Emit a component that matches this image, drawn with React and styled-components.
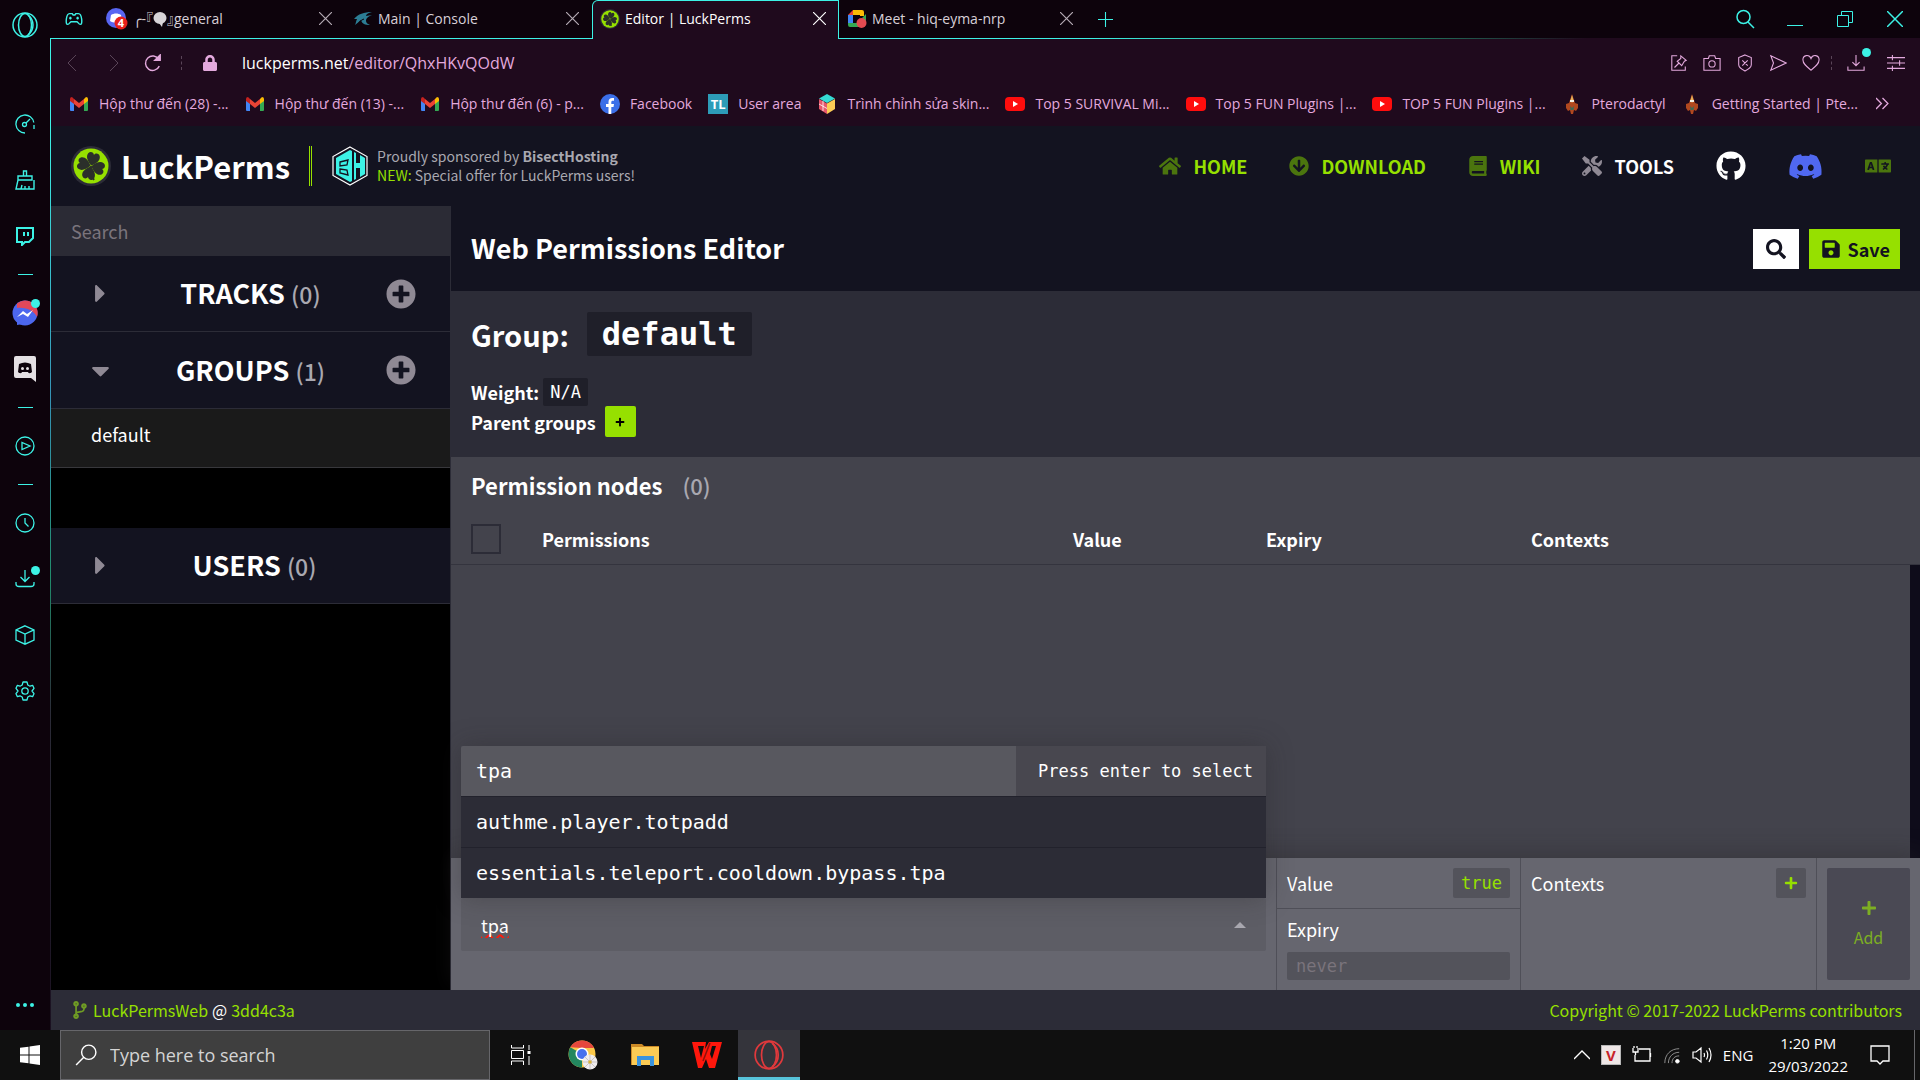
import React from 'react';
import styled, { createGlobalStyle } from 'styled-components';
import {
  FaHome,
  FaArrowCircleDown,
  FaBook,
  FaTools,
  FaGithub,
  FaDiscord,
  FaLanguage,
  FaPlusCircle,
  FaPlus,
  FaSave,
  FaSearch,
  FaCodeBranch,
  FaCaretRight,
  FaCaretDown,
  FaLock,
} from 'react-icons/fa';

const colors = {
  neon: '#3cf2e6',
  pink: '#e3a9dd',
  lime: '#96e000',
  limeDim: '#4b750e',
  night: '#131320',
  slate: '#2c2c37',
  steel: '#43434c',
  ash: '#66666f',
  chrome: '#1f0a1d',
  chromeDark: '#0d030c',
};

const fonts = {
  page: '"Noto Sans CJK JP", "Noto Sans CJK SC", sans-serif',
  mono: '"DejaVu Sans Mono", monospace',
  ui: '"Open Sans", "DejaVu Sans Mono", "Noto Sans CJK JP", sans-serif',
};

const GlobalStyle = createGlobalStyle`
  * {
    box-sizing: border-box;
  }
  body {
    margin: 0;
    background: #000;
    color: #fff;
    font-family: ${fonts.page};
    font-size: 18px;
  }
  button, input {
    font: inherit;
    color: inherit;
    border: none;
    padding: 0;
    margin: 0;
    background: none;
  }
  button {
    cursor: pointer;
  }
  a {
    color: inherit;
    text-decoration: none;
  }
  h1, h2, h3, p, ul {
    margin: 0;
    padding: 0;
  }
  svg {
    display: block;
    flex: none;
  }
`;

/* ---------- small drawings ---------- */

const Line = ({ size = 20, width, color = 'currentColor', stroke = 1, box = 20, children }) => (
  <svg width={width || size} height={size} viewBox={`0 0 ${box} ${box}`} fill="none" stroke={color} strokeWidth={stroke}>
    {children}
  </svg>
);

const OperaRing = ({ size, color }) => (
  <Line size={size} box={26} color={color} stroke={1.5}>
    <circle cx="13" cy="13" r="12" />
    <ellipse cx="13" cy="13" rx="6.5" ry="11.5" />
    <path d="M16 3c4 3 5 7 5 10s-1 7-5 10" />
  </Line>
);

const Gamepad = () => (
  <Line size={18} color={colors.neon} stroke={1.6}>
    <path d="M5 4h3l1 1.500h2L12 4h3c2 0 3 2 3.500 6 .5 4 0 6-1.500 6-2 0-2.500-3-4-3H7c-1.500 0-2 3-4 3-1.500 0-2-2-1.500-6C2 6 3 4 5 4z" />
    <path d="M6 7.500v3M4.500 9h3M12.500 9h3M14 7.500v3" />
  </Line>
);

const Cross = ({ size = 13 }) => (
  <Line size={size} box={12} stroke={1.1}>
    <path d="M0 0l12 12M12 0L0 12" />
  </Line>
);

const DiscordBadge = () => (
  <svg width="22" height="22" viewBox="0 0 22 22">
    <circle cx="10" cy="10" r="10" fill="#5865f2" />
    <path d="M5 7c3-2 7-2 10 0l1 6c-3 2-9 2-12 0z" fill="#fff" />
    <circle cx="15" cy="15" r="6.500" fill="#e8201c" />
    <text x="15" y="19" fontSize="11" fontWeight="700" fill="#fff" textAnchor="middle" fontFamily="Open Sans">4</text>
  </svg>
);

const Bubble = () => (
  <svg width="14" height="16" viewBox="0 0 14 16">
    <ellipse cx="7" cy="7" rx="6.500" ry="6" fill="#d8d4d8" />
    <path d="M6 12l3 4 1-5z" fill="#d8d4d8" />
  </svg>
);

const Bird = () => (
  <svg width="20" height="16" viewBox="0 0 20 16">
    <path d="M1 8C5 3 11 1 19 1c-4 1-6 2-6 4l6-1c-5 2-6 4-6 6 0 2 2 3 4 4-5 0-8-1-9-5-2 1-3 3-6 5 1-2 1-4 2-6z" fill="#2c7d94" />
    <path d="M4 15c2-4 4-6 7-7" stroke="#0d030c" fill="none" />
  </svg>
);

const Clover = ({ size }) => (
  <svg width={size} height={size} viewBox="0 0 40 40">
    <circle cx="20" cy="20" r="20" fill="#2c2c37" />
    <circle cx="20" cy="20" r="17.500" fill={colors.lime} />
    {[15, 105, 195, 285].map((angle) => (
      <path
        key={angle}
        d="M20 19.500C15 16 12.500 12 14 8.500c1.500-3 5-2.500 6 0 1-2.500 4.500-3 6 0 1.500 3.500-1 7.500-6 11z"
        fill="#2b2f2a"
        transform={`rotate(${angle} 20 20)`}
      />
    ))}
    <path d="M20 20c0 5 0 9 3 14" stroke="#2b2f2a" strokeWidth="1.800" fill="none" />
  </svg>
);

const MeetLogo = () => (
  <svg width="20" height="20" viewBox="0 0 20 20">
    <path d="M1 6l5-5v5z" fill="#ea4335" />
    <path d="M6 1h9q2 0 2 2v4h-4V6H6z" fill="#fbbc04" />
    <path d="M1 6h5v8H1z" fill="#4285f4" />
    <path d="M1 14h5v4H3q-2 0-2-2zM6 14h8v4H6zM15 9l4-4v9z" fill="#34a853" />
    <circle cx="14.500" cy="14" r="5" fill="#e34a50" />
  </svg>
);

const Gmail = () => (
  <svg width="20" height="16" viewBox="0 0 20 16">
    <path d="M1 4l4 3v8H2q-1 0-1-1z" fill="#4285f4" />
    <path d="M19 4l-4 3v8h3q1 0 1-1z" fill="#34a853" />
    <path d="M15 3l2-2q2 0 2 2v2l-4 3z" fill="#fbbc04" />
    <path d="M5 3l5 4 5-4v5l-5 4-5-4z" fill="#ea4335" />
    <path d="M1 3q0-2 2-2l2 2v5L1 5z" fill="#c5221f" />
  </svg>
);

const FacebookLogo = () => (
  <svg width="20" height="20" viewBox="0 0 20 20">
    <circle cx="10" cy="10" r="10" fill="#3b6fe8" />
    <path d="M8.500 20v-7H6v-3h2.500V8c0-2.600 1.500-4 3.800-4 .9 0 1.700.1 1.700.1v2.600h-1.200c-1.200 0-1.500.7-1.500 1.400V10H14l-.5 3h-2.200v7z" fill="#fff" />
  </svg>
);

const TlLogo = styled.span`
  width: 20px;
  height: 20px;
  background: #2d9cb8;
  color: #fff;
  font-size: 13px;
  font-weight: 700;
  line-height: 20px;
  text-align: center;
`;

const SkinCube = () => (
  <svg width="20" height="20" viewBox="0 0 20 20">
    <path d="M10 0l8 4.500L10 9 2 4.500z" fill="#35dbd4" />
    <path d="M2 5l8 4.500V20l-8-5z" fill="#e6566a" />
    <path d="M18 5l-8 4.500V20l8-5z" fill="#fbcb55" />
    <path d="M2 10l8 4.500M6 7v10" stroke="#fff" strokeWidth=".8" fill="none" />
  </svg>
);

const YouTube = () => (
  <svg width="20" height="20" viewBox="0 0 20 20">
    <rect y="3" width="20" height="14" rx="4" fill="#ff0d0d" />
    <path d="M8 7l5 3-5 3z" fill="#fff" />
  </svg>
);

const Ptero = () => (
  <svg width="20" height="20" viewBox="0 0 20 20">
    <path d="M10 0l2 6 1 3 3 1v4l-2 3-2-1-1 4h-2l-1-4-2 1-2-3v-4l3-1 1-3z" fill="#b1481f" />
    <path d="M10 1l1.500 5-1.500 3-1.500-3z" fill="#e8b45d" />
    <path d="M8 6h4v2H8z" fill="#f4efe3" />
    <path d="M8 12l2 2 2-2-.5 4h-3z" fill="#3b6b58" />
  </svg>
);

const BisectLogo = () => (
  <svg width="38" height="40" viewBox="0 0 38 40">
    <path d="M19 1l17 9.500v19L19 39 2 29.500v-19z" fill="#131320" stroke="#fff" strokeWidth="1.200" />
    <path d="M19 4l2 1v30l-2 1-14-8V12z" fill={colors.neon} />
    <path d="M9 16l8-2-1 5-7 1zM9 23l7 1 1 5-8-2z" fill="none" stroke="#131320" strokeWidth="1.300" />
    <path d="M23 6l2 1v10h4V9l5 3v16l-5 3v-9h-4v11l-2 1z" fill={colors.neon} />
  </svg>
);

const WindowsLogo = () => (
  <svg width="20" height="20" viewBox="0 0 20 20" fill="#fff">
    <path d="M0 2.800L8.500 1.700v7.800H0zM9.500 1.500L20 0v9.500H9.500zM0 10.500h8.500v7.800L0 17.200zM9.500 10.500H20V20L9.500 18.500z" />
  </svg>
);

const ChromeLogo = () => (
  <svg width="30" height="30" viewBox="0 0 30 30">
    <circle cx="14" cy="14" r="13.500" fill="#fbc94a" />
    <path d="M14 14L2.300 7.300A13.500 13.500 0 0 0 14 27.500z" fill="#23875f" />
    <path d="M2.300 7.300A13.500 13.500 0 0 1 26 8H14z" fill="#e5473d" />
    <circle cx="14" cy="14" r="6.500" fill="#fff" />
    <circle cx="14" cy="14" r="5" fill="#4770ee" />
    <circle cx="22" cy="22" r="7.500" fill="#f0edee" />
    <path d="M22 15v14M15 22h14M17 17l10 10M27 17L17 27" stroke="#c9c3c6" />
    <circle cx="22" cy="22" r="1.800" fill="#d9b23a" />
  </svg>
);

const FolderLogo = () => (
  <svg width="28" height="24" viewBox="0 0 28 24">
    <path d="M0 1h11l2 2h15v19H0z" fill="#cc8a26" />
    <path d="M1 4h27v18H1z" fill="#fbcb55" />
    <path d="M6 13h17v10h-4v-6h-9v6H6z" fill="#3a93dd" />
  </svg>
);

const WpsLogo = () => (
  <svg width="30" height="28" viewBox="0 0 30 28">
    <path d="M0 1h14l-1 7 4-7h13l-7 26h-6l-3-9-4 9H6z" fill="#ff170c" />
    <path d="M20 5h4l-4 13-2-5z" fill="#101010" />
    <path d="M18 2l-7 18" stroke="#8c120c" strokeWidth="1.500" />
    <path d="M6 5h6l-3 12z" fill="#101010" />
  </svg>
);

const MessengerLogo = () => (
  <svg width="26" height="26" viewBox="0 0 26 26">
    <circle cx="13" cy="13" r="12.500" fill="#4c67ee" />
    <path d="M5 3.500A12.500 12.500 0 0 1 25 17C22 11 15 7 5 8z" fill="#e0485a" />
    <path d="M5 25v-6l6 5z" fill="#4c67ee" />
    <path d="M5 17l6-6 4 3 6-4-5 7-5-3z" fill="#fff" />
  </svg>
);

const DiscordSquare = () => (
  <svg width="24" height="26" viewBox="0 0 24 26">
    <path d="M3 0h18q2 0 2 2v24l-5-4H3q-2 0-2-2V2q0-2 2-2z" fill="#e4e0e4" />
    <path d="M6 8c4-2 8-2 12 0l1 8c-2 2-4 1-4 0H9c0 1-2 2-4 0z" fill="#0d030c" />
    <circle cx="9.500" cy="12.500" r="1.500" fill="#e4e0e4" />
    <circle cx="14.500" cy="12.500" r="1.500" fill="#e4e0e4" />
  </svg>
);

/* ---------- shell ---------- */

const Desktop = styled.div`
  display: flex;
  flex-direction: column;
  min-height: 100vh;
`;

const BrowserWindow = styled.div`
  display: flex;
  flex: 1;
  background: ${colors.chromeDark};
`;

const OperaBar = styled.nav`
  display: flex;
  flex-direction: column;
  align-items: center;
  width: 50px;
  flex: none;
`;

const OperaHome = styled.button`
  display: grid;
  place-items: center;
  width: 50px;
  height: 50px;
  margin-bottom: 46px;
`;

const BarItem = styled.button`
  position: relative;
  display: grid;
  place-items: center;
  width: 50px;
  height: ${({ $last }) => ($last ? '50px' : '56px')};
  margin-top: ${({ $last }) => ($last ? 'auto' : '0')};
  color: ${colors.neon};
`;

const BarDash = styled.span`
  width: 15px;
  height: 1px;
  margin: 10px 0;
  background: ${colors.neon};
`;

const Dot = styled.span`
  position: absolute;
  top: ${({ $top }) => $top}px;
  right: ${({ $right }) => $right}px;
  width: 9px;
  height: 9px;
  border-radius: 50%;
  background: ${colors.neon};
`;

const WindowMain = styled.div`
  display: flex;
  flex-direction: column;
  flex: 1;
  min-width: 0;
`;

/* ---------- tabs ---------- */

const TabStrip = styled.div`
  display: flex;
  align-items: stretch;
  height: 39px;
  font-family: ${fonts.ui};
  font-size: 14px;
  line-height: 20px;
`;

const TabLine = styled.div`
  display: flex;
  align-items: center;
  flex: ${({ $grow }) => ($grow ? 1 : 'none')};
  padding-left: ${({ $grow }) => ($grow ? '12px' : '15px')};
  width: ${({ $grow }) => ($grow ? 'auto' : '48px')};
  color: ${colors.neon};
  border-bottom: 1px solid;
  border-image: ${({ $grow }) =>
    $grow
      ? `linear-gradient(90deg, ${colors.neon}, #218c6c 35%, ${colors.chrome} 60%) 1`
      : `linear-gradient(${colors.neon}, ${colors.neon}) 1`};
`;

const Tab = styled.div`
  display: flex;
  align-items: center;
  gap: 5px;
  flex: none;
  width: 247px;
  padding: 2px 13px 3px 8px;
  color: ${({ $active }) => ($active ? '#fff' : '#d8d0d8')};
  border-bottom: 1px solid ${colors.neon};
  ${({ $active }) =>
    $active &&
    `
    background: ${colors.chrome};
    padding: 1px 12px 4px 7px;
    border: 1px solid ${colors.neon};
    border-bottom: none;
    border-radius: 6px 0 0 0;
  `}
`;

const TabTitle = styled.span`
  display: flex;
  align-items: center;
  flex: 1;
  white-space: nowrap;
  font-feature-settings: 'halt';
`;

const TabClose = styled.button`
  color: ${({ $active }) => ($active ? '#fff' : '#b5abb5')};
`;

const WindowButtons = styled.div`
  display: flex;
  margin-left: auto;
`;

const WindowButton = styled.button`
  display: grid;
  place-items: center;
  width: 50px;
  height: 38px;
`;

/* ---------- address bar ---------- */

const AddressBar = styled.div`
  display: flex;
  align-items: center;
  height: 48px;
  padding: 0 4px 0 2px;
  background: ${colors.chrome};
  color: ${colors.pink};
  font-family: ${fonts.ui};
  border-left: 1px solid ${colors.neon};
`;

const NavButton = styled.button`
  display: grid;
  place-items: center;
  width: 40px;
  height: 40px;
  color: ${({ $muted }) => ($muted ? '#5a4558' : colors.pink)};
`;

const Divider = styled.span`
  height: 14px;
  margin: 0 ${({ $gap }) => $gap}px;
  border-left: 1px dashed #5a4558;
`;

const Url = styled.p`
  flex: 1;
  margin-left: 12px;
  font-size: 16px;
  line-height: 24px;
  span {
    color: #fff;
  }
`;

const ToolButton = styled.button`
  position: relative;
  display: grid;
  place-items: center;
  width: ${({ $wide }) => ($wide ? '40px' : '33px')};
  height: 40px;
`;

const Bookmarks = styled.div`
  display: flex;
  align-items: center;
  gap: 16px;
  height: 39px;
  padding: 0 31px 6px 18px;
  background: ${colors.chrome};
  color: ${colors.pink};
  font-family: ${fonts.ui};
  font-size: 14px;
  line-height: 20px;
  border-left: 1px solid ${colors.neon};
`;

const Bookmark = styled.a`
  display: flex;
  align-items: center;
  gap: 10px;
  white-space: nowrap;
`;

const MoreBookmarks = styled.button`
  margin-left: auto;
`;

/* ---------- LuckPerms page ---------- */

const Page = styled.div`
  display: flex;
  flex-direction: column;
  flex: 1;
  background: ${colors.night};
  border-left: 1px solid;
  border-image: linear-gradient(${colors.neon}, #3593b5 30%, #218c6c 50%, #2b2b37 65%, #1a1020) 1;
`;

const Header = styled.header`
  display: flex;
  align-items: center;
  height: 80px;
  padding: 0 29px 0 20px;
`;

const Brand = styled.a`
  display: flex;
  align-items: center;
  gap: 10px;
  padding-right: 19px;
  font-size: 31px;
  line-height: 40px;
  font-weight: 700;
  border-right: 3px double ${colors.lime};
`;

const Sponsor = styled.a`
  display: flex;
  align-items: center;
  gap: 8px;
  margin-left: 19px;
  color: #a9a8b0;
  font-size: 14px;
  line-height: 19px;
  em {
    color: ${colors.lime};
    font-style: normal;
  }
`;

const Menu = styled.nav`
  display: flex;
  align-items: center;
  gap: 42px;
  margin-left: auto;
`;

const MenuLink = styled.a`
  display: flex;
  align-items: center;
  gap: 12px;
  font-size: 18px;
  line-height: 24px;
  font-weight: 700;
  color: ${({ $plain }) => ($plain ? '#fff' : colors.lime)};
  svg {
    color: ${({ $plain }) => ($plain ? '#8f8994' : colors.limeDim)};
  }
`;

const IconLink = styled.a`
  color: ${({ $color }) => $color};
`;

const Editor = styled.div`
  display: flex;
  flex: 1;
`;

const Side = styled.aside`
  width: 400px;
  flex: none;
  background: #000;
  border-right: 1px solid ${colors.slate};
`;

const SideSearch = styled.input`
  display: block;
  width: 100%;
  height: 50px;
  padding: 0 20px;
  background: #2b2b35;
  font-size: 18px;
  &::placeholder {
    color: #7a747c;
    opacity: 1;
  }
`;

const SideHeading = styled.div`
  display: grid;
  grid-template-columns: 98px 1fr ${({ $add }) => ($add ? '98px' : '90px')};
  align-items: center;
  justify-items: center;
  height: ${({ $tall }) => ($tall ? '77px' : '76px')};
  background: ${colors.night};
  border-bottom: 1px solid ${colors.slate};
  color: #8f8994;
`;

const SideTitle = styled.h2`
  color: #fff;
  font-size: 27px;
  line-height: 40px;
  font-weight: 700;
  span {
    color: #a9a8b0;
    font-size: 23px;
    font-weight: 500;
  }
`;

const GroupList = styled.ul`
  list-style: none;
  margin-bottom: 60px;
`;

const GroupItem = styled.li`
  height: 59px;
  padding: 11px 40px;
  background: #1a1a1a;
  border-bottom: 1px solid #38383c;
  line-height: 28px;
`;

const Content = styled.main`
  display: flex;
  flex-direction: column;
  flex: 1;
  min-width: 0;
`;

const TitleBar = styled.div`
  display: flex;
  align-items: center;
  gap: 10px;
  height: 85px;
  padding: 0 20px;
`;

const PageTitle = styled.h1`
  flex: 1;
  font-size: 27px;
  line-height: 38px;
  padding-bottom: 2px;
  font-weight: 700;
`;

const SquareButton = styled.button`
  display: flex;
  align-items: center;
  justify-content: center;
  gap: 6px;
  height: 40px;
  padding: 0 ${({ $primary }) => ($primary ? '10px 0 12px' : '13px')};
  background: ${({ $primary }) => ($primary ? colors.lime : '#fff')};
  color: ${colors.night};
  font-weight: 700;
`;

const GroupInfo = styled.section`
  display: flex;
  flex-direction: column;
  align-items: flex-start;
  padding: 21px 20px 20px;
  background: ${colors.slate};
`;

const GroupName = styled.h2`
  display: flex;
  align-items: center;
  gap: 18px;
  margin-bottom: 22px;
  font-size: 29px;
  line-height: 42px;
  font-weight: 700;
`;

const Code = styled.code`
  padding: 0 ${({ $large }) => ($large ? '15px' : '7px')};
  border-radius: 2px;
  background: #1f1f29;
  font-family: ${fonts.mono};
  font-size: ${({ $large }) => ($large ? '32px' : '17px')};
  line-height: ${({ $large }) => ($large ? '44px' : '28px')};
  font-weight: ${({ $large }) => ($large ? 700 : 400)};
`;

const InfoRow = styled.div`
  display: flex;
  align-items: center;
  gap: ${({ $gap }) => $gap}px;
  font-size: 18px;
  line-height: 28px;
  font-weight: 700;
`;

const AddParent = styled.button`
  display: grid;
  place-items: center;
  width: 31px;
  height: 31px;
  border-radius: 2px;
  background: ${colors.lime};
  color: #000;
`;

const Nodes = styled.section`
  display: flex;
  flex-direction: column;
  flex: 1;
  background: ${colors.steel};
`;

const NodesTitle = styled.h3`
  padding: 10px 20px 0;
  font-size: 22px;
  line-height: 36px;
  font-weight: 700;
  span {
    margin-left: 15px;
    color: #a9a8b0;
    font-weight: 500;
  }
`;

const NodeTable = styled.table`
  width: 100%;
  margin-top: 11px;
  border-collapse: collapse;
  table-layout: fixed;
  border-bottom: 1px solid #34343e;
  th {
    height: 50px;
    padding: 0;
    text-align: left;
    font-weight: 700;
  }
`;

const CheckCell = styled.th`
  width: 91px;
`;

const Check = styled.input`
  appearance: none;
  display: block;
  width: 30px;
  height: 30px;
  margin-left: 20px;
  border: 2px solid ${colors.slate};
`;

const ColHead = styled.th`
  width: ${({ $width }) => $width};
`;

const NodeScroll = styled.div`
  flex: 1;
  border-right: 10px solid #0e0c1a;
`;

/* ---------- add-node form ---------- */

const AddBar = styled.form`
  display: grid;
  grid-template-columns: 1fr 244px 296px 104px;
  height: 132px;
  background: ${colors.ash};
  box-shadow: 0 -6px 20px rgba(40, 38, 40, 0.35);
`;

const Cell = styled.div`
  padding: 10px;
  border-left: 1px solid #4f4f58;
`;

const PickerCell = styled.div`
  padding: 40px 10px 0;
`;

const Picker = styled.div`
  position: relative;
  display: flex;
  align-items: center;
  height: 53px;
  padding: 0 20px;
  border-radius: 2px;
  background: #5d5d65;
`;

const PickerInput = styled.input`
  flex: 1;
  outline: none;
  font-size: 18px;
  text-decoration: underline wavy #ff1a0a 2px;
  text-decoration-skip-ink: none;
`;

const Triangle = styled.span`
  border: 6px solid transparent;
  border-top: none;
  border-bottom: 6px solid #a9a8b0;
`;

const Options = styled.ul`
  position: absolute;
  left: 0;
  right: 0;
  bottom: 100%;
  list-style: none;
  font-family: ${fonts.mono};
  font-size: 20px;
  line-height: 50px;
  box-shadow: 0 0 24px rgba(40, 38, 40, 0.35);
`;

const Option = styled.li`
  display: flex;
  justify-content: space-between;
  padding-left: 15px;
  background: ${({ $active }) => ($active ? '#58585f' : '#2c2c36')};
  border-bottom: ${({ $last }) => ($last ? 'none' : '1px solid #22222c')};
  border-radius: ${({ $active }) => ($active ? '2px 2px 0 0' : '0')};
`;

const Hint = styled.span`
  padding: 0 13px 0 22px;
  background: #48474f;
  font-size: 17px;
`;

const FieldRow = styled.div`
  display: flex;
  align-items: center;
  justify-content: space-between;
  line-height: 28px;
`;

const SmallButton = styled.button`
  display: grid;
  place-items: center;
  height: 30px;
  padding: 0 8px;
  border-radius: 2px;
  background: #53535b;
  color: ${colors.lime};
  font-family: ${fonts.mono};
  font-size: 17px;
  line-height: 30px;
`;

const ExpiryRow = styled.div`
  margin: 10px -10px 0;
  padding: 5px 10px 0;
  border-top: 1px solid #4f4f58;
  label {
    display: block;
    line-height: 30px;
  }
  input {
    display: block;
    width: 100%;
    height: 28px;
    margin-top: 8px;
    padding: 0 9px;
    border-radius: 2px;
    background: #53535b;
    font-family: ${fonts.mono};
    font-size: 17px;
  }
  input::placeholder {
    color: #7a747c;
    opacity: 1;
  }
`;

const AddButton = styled.button`
  display: flex;
  flex-direction: column;
  align-items: center;
  justify-content: center;
  gap: 6px;
  width: 100%;
  height: 112px;
  padding-top: 4px;
  border-radius: 2px;
  background: #4a4954;
  color: #7dae23;
  font-size: 16px;
  line-height: 30px;
`;

const Footer = styled.footer`
  display: flex;
  align-items: center;
  justify-content: space-between;
  height: 40px;
  padding: 0 18px 0 20px;
  background: ${colors.slate};
  color: ${colors.lime};
  font-size: 16px;
  line-height: 24px;
`;

const Commit = styled.p`
  display: flex;
  align-items: center;
  gap: 4px;
  svg {
    color: #6f9c24;
  }
  span {
    color: #fff;
  }
`;

/* ---------- taskbar ---------- */

const Taskbar = styled.div`
  display: flex;
  align-items: stretch;
  height: 50px;
  background: #101010;
  font-family: ${fonts.ui};
`;

const StartButton = styled.button`
  display: grid;
  place-items: center;
  width: 60px;
`;

const TaskSearch = styled.label`
  display: flex;
  align-items: center;
  gap: 13px;
  width: 430px;
  padding-left: 14px;
  border: 1px solid #66666a;
  background: #3f3f3f;
  input {
    flex: 1;
    font-size: 18px;
  }
  input::placeholder {
    color: #d4d4d4;
    opacity: 1;
  }
`;

const TaskButton = styled.button`
  display: grid;
  place-items: center;
  width: 62px;
  border-bottom: 3px solid ${({ $active }) => ($active ? '#58c4dc' : 'transparent')};
  border-top: 3px solid transparent;
  background: ${({ $active }) => ($active ? '#34343b' : 'none')};
`;

const Tray = styled.div`
  display: flex;
  align-items: center;
  gap: 11px;
  margin-left: auto;
  padding-right: 5px;
  font-size: 15px;
`;

const VietKey = styled.span`
  width: 20px;
  height: 20px;
  border: 1px solid #b7b7b7;
  background: #efe7e7;
  color: #c8232a;
  font-weight: 700;
  line-height: 18px;
  text-align: center;
`;

const Clock = styled.p`
  margin: 0 11px 0 4px;
  text-align: center;
  line-height: 23px;
`;

const ShowDesktop = styled.span`
  align-self: stretch;
  margin-left: 13px;
  border-left: 1px solid #66666a;
`;

const bookmarks = [
  { icon: <Gmail />, text: 'Hộp thư đến (28) -...' },
  { icon: <Gmail />, text: 'Hộp thư đến (13) -...' },
  { icon: <Gmail />, text: 'Hộp thư đến (6) - p...' },
  { icon: <FacebookLogo />, text: 'Facebook' },
  { icon: <TlLogo>TL</TlLogo>, text: 'User area' },
  { icon: <SkinCube />, text: 'Trình chỉnh sửa skin...' },
  { icon: <YouTube />, text: 'Top 5 SURVIVAL Mi...' },
  { icon: <YouTube />, text: 'Top 5 FUN Plugins |...' },
  { icon: <YouTube />, text: 'TOP 5 FUN Plugins |...' },
  { icon: <Ptero />, text: 'Pterodactyl' },
  { icon: <Ptero />, text: 'Getting Started | Pte...' },
];

const Sidebar = () => (
  <OperaBar>
    <OperaHome aria-label="Opera"><OperaRing size={26} color={colors.neon} /></OperaHome>
    <BarItem aria-label="Speed Dial">
      <Line stroke={1.3}><path d="M10 19A9 9 0 1 1 18.800 8.500M19 11v4M11 9l4-4" /><circle cx="9.500" cy="10.500" r="2" /></Line>
    </BarItem>
    <BarItem aria-label="Cleaner">
      <Line stroke={1.4}><path d="M8.500 6V1h3v5M3 10V6h14v4zM3 10l-2 9h18V10M6 19l1-4M10 19v-3M14 19v-3" /></Line>
    </BarItem>
    <BarItem aria-label="Twitch">
      <Line stroke={2}><path d="M2 2h16v10l-4 4h-4l-3 3v-3H2zM9 6v4M13 6v4" /></Line>
    </BarItem>
    <BarDash />
    <BarItem aria-label="Messenger"><MessengerLogo /><Dot $top={14} $right={10} /></BarItem>
    <BarItem aria-label="Discord"><DiscordSquare /></BarItem>
    <BarDash />
    <BarItem aria-label="Player">
      <Line stroke={1.3}><circle cx="10" cy="10" r="9" /><path d="M7 6.500v7l8-3.500z" /></Line>
    </BarItem>
    <BarDash />
    <BarItem aria-label="History">
      <Line stroke={1.3}><circle cx="10" cy="10" r="9" /><path d="M10 5v5l3.500 3.500" /></Line>
    </BarItem>
    <BarItem aria-label="Downloads">
      <Line stroke={1.3}><path d="M10 1v11M5.500 8l4.500 4.500L14.500 8M1 13v2q0 2.500 3 2.500h12q3 0 3-2.500v-2" /></Line>
      <Dot $top={15} $right={10} />
    </BarItem>
    <BarItem aria-label="Extensions">
      <Line stroke={1.3}><path d="M10 .8l9 4v10.400l-9 4-9-4V4.800zM1 4.800l9 4.200 9-4.200M10 9v10" /></Line>
    </BarItem>
    <BarItem aria-label="Settings">
      <Line stroke={1.3}>
        <circle cx="10" cy="10" r="3.200" />
        <path d="M8 1h4l.8 3 2.200 1.200 2.600-.9 1.400 3-2 2.700 2 2.700-1.400 3-2.600-.9-2.200 1.200-.8 3H8l-.8-3L5 14.800l-2.600.9-1.400-3L3 10 1 7.300l1.400-3 2.600.9L7.200 4z" strokeLinejoin="round" />
      </Line>
    </BarItem>
    <BarItem aria-label="More" $last>
      <svg width="18" height="4" viewBox="0 0 18 4" fill={colors.neon}>
        <circle cx="2" cy="2" r="2" /><circle cx="9" cy="2" r="2" /><circle cx="16" cy="2" r="2" />
      </svg>
    </BarItem>
  </OperaBar>
);

const BrowserTab = ({ icon, children, active }) => (
  <Tab $active={active}>
    {icon}
    <TabTitle>{children}</TabTitle>
    <TabClose $active={active} aria-label="Close tab"><Cross /></TabClose>
  </Tab>
);

const Tabs = () => (
  <TabStrip>
    <TabLine><Gamepad /></TabLine>
    <BrowserTab icon={<DiscordBadge />}>╭-『<Bubble />』general</BrowserTab>
    <BrowserTab icon={<Bird />}>Main | Console</BrowserTab>
    <BrowserTab icon={<Clover size={20} />} active>Editor | LuckPerms</BrowserTab>
    <BrowserTab icon={<MeetLogo />}>Meet - hiq-eyma-nrp</BrowserTab>
    <TabLine $grow>
      <Line size={15} box={14}><path d="M7 0v14M0 7h14" /></Line>
      <WindowButtons>
        <WindowButton aria-label="Search tabs">
          <Line size={20} stroke={1.5}><circle cx="8.500" cy="8" r="6.500" /><path d="M13 13l6 6" /></Line>
        </WindowButton>
        <WindowButton aria-label="Minimize">
          <Line size={16} box={16}><path d="M0 14.500h16" /></Line>
        </WindowButton>
        <WindowButton aria-label="Restore">
          <Line size={16} box={16}><path d="M.5 4.500h11v11H.5zM4.500 4.500v-4h11v11h-4" /></Line>
        </WindowButton>
        <WindowButton aria-label="Close"><Cross size={16} /></WindowButton>
      </WindowButtons>
    </TabLine>
  </TabStrip>
);

const Address = () => (
  <AddressBar>
    <NavButton aria-label="Back" $muted><Line size={16} box={16}><path d="M11 0L3 8l8 8" /></Line></NavButton>
    <NavButton aria-label="Forward" $muted><Line size={16} box={16}><path d="M5 0l8 8-8 8" /></Line></NavButton>
    <NavButton aria-label="Reload">
      <Line size={18} stroke={1.6}><path d="M17 13.500A8 8 0 1 1 16.500 6" /><path d="M18 1v6h-6z" fill="currentColor" /></Line>
    </NavButton>
    <Divider $gap={8} />
    <NavButton aria-label="Site information"><FaLock size={16} /></NavButton>
    <Url><span>luckperms.net</span>/editor/QhxHKvQOdW</Url>
    <ToolButton aria-label="Pin">
      <Line size={18} stroke={1.2}><path d="M8 2H2v16h15v-4M12 2l6 5-2 1-3 5-5-5 4-3zM10 10l-5 5" /></Line>
    </ToolButton>
    <ToolButton aria-label="Snapshot">
      <Line size={18} stroke={1.2}><path d="M1 5h5l1-3h6l1 3h5v13H1z" /><circle cx="10" cy="11" r="3.500" /></Line>
    </ToolButton>
    <ToolButton aria-label="Ad blocker">
      <Line size={18} stroke={1.2}><path d="M10 1l7 3v8c0 3-3 5-7 7-4-2-7-4-7-7V4zM7 7l6 6M13 7l-6 6" /></Line>
    </ToolButton>
    <ToolButton aria-label="Send">
      <Line size={18} stroke={1.2}><path d="M2 2l17 8-17 8 3-8z" /></Line>
    </ToolButton>
    <ToolButton aria-label="Favourite">
      <Line size={18} stroke={1.2}><path d="M10 18C5 14 1 11 1 6.500 1 1 8 0 10 5c2-5 9-4 9 1.500C19 11 15 14 10 18z" /></Line>
    </ToolButton>
    <Divider $gap={4} />
    <ToolButton aria-label="Downloads" $wide>
      <Line size={18} stroke={1.2}><path d="M10 1v12M6 9l4 4 4-4M1 14v4h18v-4" /></Line>
      <Dot $top={5} $right={5} />
    </ToolButton>
    <ToolButton aria-label="Easy setup" $wide>
      <Line size={18} stroke={1.2}><path d="M0 4h20M0 10h20M0 16h20M6 1v6M14 7v6M6 13v6" /></Line>
    </ToolButton>
  </AddressBar>
);

const SideSection = ({ title, count, open, add, tall }) => (
  <SideHeading $add={add} $tall={tall}>
    {open ? <FaCaretDown size={29} /> : <FaCaretRight size={29} />}
    <SideTitle>{title} <span>({count})</span></SideTitle>
    {add && <button aria-label={`Add ${title.toLowerCase()}`}><FaPlusCircle size={30} /></button>}
  </SideHeading>
);

const NodeForm = () => (
  <AddBar>
    <PickerCell>
      <Picker>
        <Options>
          <Option $active>tpa<Hint>Press enter to select</Hint></Option>
          <Option>authme.player.totpadd</Option>
          <Option $last>essentials.teleport.cooldown.bypass.tpa</Option>
        </Options>
        <PickerInput aria-label="Permission" defaultValue="tpa" />
        <Triangle />
      </Picker>
    </PickerCell>
    <Cell>
      <FieldRow>Value <SmallButton type="button">true</SmallButton></FieldRow>
      <ExpiryRow>
        <label htmlFor="expiry">Expiry</label>
        <input id="expiry" placeholder="never" />
      </ExpiryRow>
    </Cell>
    <Cell>
      <FieldRow>
        Contexts
        <SmallButton type="button" aria-label="Add context"><FaPlus size={14} /></SmallButton>
      </FieldRow>
    </Cell>
    <Cell>
      <AddButton type="button"><FaPlus size={16} />Add</AddButton>
    </Cell>
  </AddBar>
);

const LuckPerms = () => (
  <Page>
    <Header>
      <Brand href="#"><Clover size={40} />LuckPerms</Brand>
      <Sponsor href="#">
        <BisectLogo />
        <p>Proudly sponsored by <b>BisectHosting</b><br /><em>NEW:</em> Special offer for LuckPerms users!</p>
      </Sponsor>
      <Menu>
        <MenuLink href="#"><FaHome size={22} />HOME</MenuLink>
        <MenuLink href="#"><FaArrowCircleDown size={20} />DOWNLOAD</MenuLink>
        <MenuLink href="#"><FaBook size={20} />WIKI</MenuLink>
        <MenuLink href="#" $plain><FaTools size={20} />TOOLS</MenuLink>
        <IconLink href="#" aria-label="GitHub" $color="#fff"><FaGithub size={30} /></IconLink>
        <IconLink href="#" aria-label="Discord" $color="#5068f0"><FaDiscord size={35} /></IconLink>
        <IconLink href="#" aria-label="Language" $color={colors.limeDim}><FaLanguage size={26} /></IconLink>
      </Menu>
    </Header>
    <Editor>
      <Side>
        <SideSearch aria-label="Search" placeholder="Search" />
        <SideSection title="TRACKS" count={0} add />
        <SideSection title="GROUPS" count={1} open add tall />
        <GroupList><GroupItem>default</GroupItem></GroupList>
        <SideSection title="USERS" count={0} />
      </Side>
      <Content>
        <TitleBar>
          <PageTitle>Web Permissions Editor</PageTitle>
          <SquareButton aria-label="Search"><FaSearch size={20} /></SquareButton>
          <SquareButton $primary><FaSave size={20} />Save</SquareButton>
        </TitleBar>
        <GroupInfo>
          <GroupName>Group: <Code $large>default</Code></GroupName>
          <InfoRow $gap={4}>Weight: <Code>N/A</Code></InfoRow>
          <InfoRow $gap={9}>Parent groups <AddParent aria-label="Add parent group"><FaPlus size={10} /></AddParent></InfoRow>
        </GroupInfo>
        <Nodes>
          <NodesTitle>Permission nodes <span>(0)</span></NodesTitle>
          <NodeTable>
            <thead>
              <tr>
                <CheckCell><Check type="checkbox" aria-label="Select all" /></CheckCell>
                <ColHead>Permissions</ColHead>
                <ColHead $width="193px">Value</ColHead>
                <ColHead $width="265px">Expiry</ColHead>
                <ColHead $width="389px">Contexts</ColHead>
              </tr>
            </thead>
          </NodeTable>
          <NodeScroll />
          <NodeForm />
        </Nodes>
      </Content>
    </Editor>
    <Footer>
      <Commit><FaCodeBranch size={18} /><a href="#">LuckPermsWeb</a> <span>@</span> <a href="#">3dd4c3a</a></Commit>
      <a href="#">Copyright © 2017-2022 LuckPerms contributors</a>
    </Footer>
  </Page>
);

const WindowsBar = () => (
  <Taskbar>
    <StartButton aria-label="Start"><WindowsLogo /></StartButton>
    <TaskSearch>
      <Line size={22} stroke={1.3}><circle cx="12.500" cy="7.500" r="6.500" /><path d="M8 12l-7 7" /></Line>
      <input aria-label="Type here to search" placeholder="Type here to search" />
    </TaskSearch>
    <TaskButton aria-label="Task view">
      <Line size={20} color="#fff"><path d="M.5 0v3h12V0M.5 5.500h12v8H.5zM.5 20v-4h12v4M18 0v5M18 11v9" /><path d="M16.500 6h3v3h-3z" fill="#fff" stroke="none" /></Line>
    </TaskButton>
    <TaskButton aria-label="Chrome"><ChromeLogo /></TaskButton>
    <TaskButton aria-label="File Explorer"><FolderLogo /></TaskButton>
    <TaskButton aria-label="WPS Office"><WpsLogo /></TaskButton>
    <TaskButton aria-label="Opera GX" $active><OperaRing size={30} color="#e0393c" /></TaskButton>
    <Tray>
      <Line size={16} box={16} stroke={1.3}><path d="M0 12l8-8 8 8" /></Line>
      <VietKey>V</VietKey>
      <Line size={20} stroke={1.3}><path d="M7 4h11v12H3v-6M18.500 8v4M1 3v4h5V3M2 3V1M5 3V1M3.500 7v3" /></Line>
      <Line size={18}>
        <circle cx="16" cy="17" r="2" fill="#fff" />
        <path d="M10 19c0-5 3-8 8-8M6 19C6 12 11 7 18 7M2 19C2 9 9 3 18 3" stroke="#999" />
      </Line>
      <Line size={20} stroke={1.2}><path d="M1 7v6h3l5 4V3L4 7zM12 8q1 2 0 4M14.500 5.500q2.500 4.500 0 9M17 3q4 7 0 14" /></Line>
      <span>ENG</span>
      <Clock>1:20 PM<br />29/03/2022</Clock>
      <Line size={20} stroke={1.3}><path d="M1 1h18v15h-6l-3 3-3-3H1z" /></Line>
      <ShowDesktop />
    </Tray>
  </Taskbar>
);

export default function App() {
  return (
    <Desktop>
      <GlobalStyle />
      <BrowserWindow>
        <Sidebar />
        <WindowMain>
          <Tabs />
          <Address />
          <Bookmarks>
            {bookmarks.map(({ icon, text }) => (
              <Bookmark href="#" key={text}>{icon}{text}</Bookmark>
            ))}
            <MoreBookmarks aria-label="More bookmarks">
              <Line size={13} box={12} stroke={1.2}><path d="M0 1l5 5-5 5M6 1l5 5-5 5" /></Line>
            </MoreBookmarks>
          </Bookmarks>
          <LuckPerms />
        </WindowMain>
      </BrowserWindow>
      <WindowsBar />
    </Desktop>
  );
}
